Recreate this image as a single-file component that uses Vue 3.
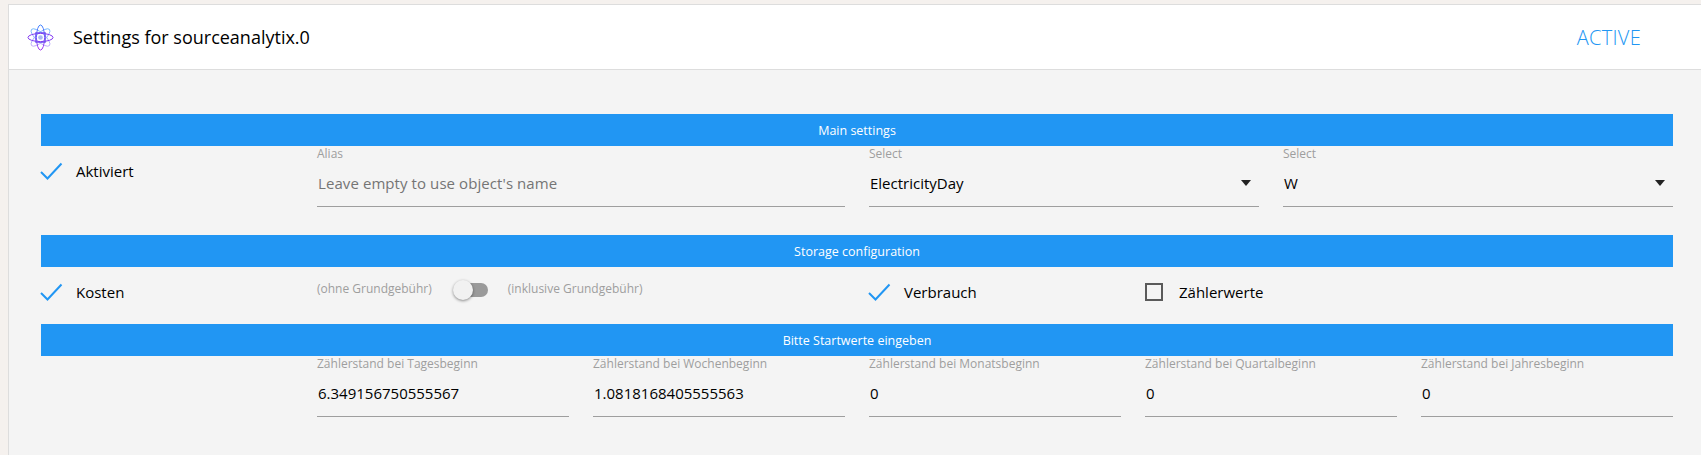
<script setup>
const topFields = [
  { label: 'Zählerstand bei Tagesbeginn', value: '6.349156750555567' },
  { label: 'Zählerstand bei Wochenbeginn', value: '1.0818168405555563' },
  { label: 'Zählerstand bei Monatsbeginn', value: '0' },
  { label: 'Zählerstand bei Quartalbeginn', value: '0' },
  { label: 'Zählerstand bei Jahresbeginn', value: '0' }
]
</script>

<template>
  <div class="page">
    <div class="panel">
      <header class="head">
        <svg class="logo" viewBox="0 0 28 28" fill="none">
          <defs>
            <linearGradient id="lg" gradientUnits="userSpaceOnUse" x1="14" y1="1" x2="14" y2="27">
              <stop offset="0" stop-color="#2f7bff" />
              <stop offset="1" stop-color="#a020f0" />
            </linearGradient>
            <linearGradient id="lga" gradientUnits="userSpaceOnUse" x1="14" y1="1" x2="14" y2="27" gradientTransform="rotate(-48 14 14)">
              <stop offset="0" stop-color="#55b8ff" />
              <stop offset="1" stop-color="#d3a0f8" />
            </linearGradient>
            <linearGradient id="lgb" gradientUnits="userSpaceOnUse" x1="14" y1="1" x2="14" y2="27" gradientTransform="rotate(48 14 14)">
              <stop offset="0" stop-color="#55b8ff" />
              <stop offset="1" stop-color="#d3a0f8" />
            </linearGradient>
          </defs>
          <ellipse cx="14" cy="14" rx="4.6" ry="12.5" stroke="url(#lga)" stroke-width="0.9" transform="rotate(48 14 14)" />
          <ellipse cx="14" cy="14" rx="4.6" ry="12.5" stroke="url(#lgb)" stroke-width="0.9" transform="rotate(-48 14 14)" />
          <ellipse cx="14" cy="14" rx="13" ry="4.2" stroke="#7a2cf0" stroke-width="0.95" />
          <ellipse cx="14" cy="14" rx="4.2" ry="13" stroke="url(#lg)" stroke-width="0.95" />
          <rect x="9" y="9" width="10" height="10" stroke="#6a4cf0" stroke-width="0.9" />
          <circle cx="14" cy="14" r="2.4" fill="#a9b8f2" />
        </svg>
        <span class="title">Settings for sourceanalytix.0</span>
        <span class="status">ACTIVE</span>
      </header>

      <main class="body">
        <div class="bar">Main settings</div>
        <div class="grid row-one">
          <label class="cell s2 check">
            <svg class="tick" viewBox="0 0 23 18" fill="none"><path d="M1 10l6.5 6.5L21.5 1.5" stroke="#2196f3" stroke-width="2" /></svg>
            <span>Aktiviert</span>
          </label>
          <div class="cell s4 field">
            <div class="lbl">Alias</div>
            <div class="input placeholder">Leave empty to use object's name</div>
          </div>
          <div class="cell s3 field">
            <div class="lbl">Select</div>
            <div class="input select"><span>ElectricityDay</span><i class="arrow"></i></div>
          </div>
          <div class="cell s3 field">
            <div class="lbl">Select</div>
            <div class="input select"><span>W</span><i class="arrow"></i></div>
          </div>
        </div>

        <div class="bar">Storage configuration</div>
        <div class="grid row-two">
          <label class="cell s2 check">
            <svg class="tick" viewBox="0 0 23 18" fill="none"><path d="M1 10l6.5 6.5L21.5 1.5" stroke="#2196f3" stroke-width="2" /></svg>
            <span>Kosten</span>
          </label>
          <div class="cell s4 switch">
            <span>(ohne Grundgebühr)</span>
            <span class="track"><i class="knob"></i></span>
            <span>(inklusive Grundgebühr)</span>
          </div>
          <label class="cell s2 check">
            <svg class="tick" viewBox="0 0 23 18" fill="none"><path d="M1 10l6.5 6.5L21.5 1.5" stroke="#2196f3" stroke-width="2" /></svg>
            <span>Verbrauch</span>
          </label>
          <label class="cell s2 check">
            <span class="box"></span>
            <span>Zählerwerte</span>
          </label>
        </div>

        <div class="bar">Bitte Startwerte eingeben</div>
        <div class="grid">
          <div class="cell s2"></div>
          <div v-for="f in topFields" :key="f.label" class="cell s2 field">
            <div class="lbl">{{ f.label }}</div>
            <div class="input">{{ f.value }}</div>
          </div>
        </div>
      </main>
    </div>
  </div>
</template>

<style>
html, body { margin: 0; background: #f5f1ee; overflow: hidden; }
</style>

<style scoped>
.page {
  height: 455px;
  box-sizing: border-box;
  padding: 4px 0 0 8px;
  background: #f5f1ee;
  font-family: "Open Sans", "Noto Sans", sans-serif;
  overflow: hidden;
}
.panel {
  height: 451px;
  box-sizing: border-box;
  border-top: 1px solid #dddddd;
  border-left: 1px solid #dddddd;
  background: #f4f4f4;
}
.head {
  height: 65px;
  box-sizing: border-box;
  display: flex;
  align-items: center;
  background: #fff;
  border-bottom: 1px solid #dddddd;
  padding-left: 18px;
}
.logo { width: 27px; height: 27px; flex: none; }
.title {
  margin-left: 19px;
  font-size: 18px;
  color: #000;
}
.status {
  margin-left: auto;
  margin-right: 60px;
  font-size: 20px;
  font-weight: 300;
  letter-spacing: 0.3px;
  color: #2196f3;
}
.body { padding: 44px 28px 0 32px; }
.bar {
  height: 32px;
  line-height: 33px;
  background: #2196f3;
  color: #fff;
  text-align: center;
  font-size: 12.5px;
}
.grid {
  display: grid;
  grid-template-columns: repeat(12, 1fr);
  margin: 0 -12px;
}
.row-one { padding-bottom: 28px; }
.row-two { height: 57px; }
.cell { padding: 0 12px; min-width: 0; }
.s2 { grid-column: span 2; }
.s3 { grid-column: span 3; }
.s4 { grid-column: span 4; }
.check {
  display: flex;
  align-items: center;
  height: 49px;
  font-size: 15px;
  color: #000;
}
.tick { width: 23px; height: 18px; flex: none; margin: 1px 13px 0 -1px; }
.box {
  width: 18px;
  height: 18px;
  box-sizing: border-box;
  border: 2px solid #5a5a5a;
  flex: none;
  margin: 0 16px 0 0;
}
.lbl {
  height: 14px;
  line-height: 15px;
  font-size: 12px;
  color: #9e9e9e;
  white-space: nowrap;
}
.input {
  height: 46px;
  line-height: 47px;
  border-bottom: 1px solid #9e9e9e;
  font-size: 15px;
  color: #000;
  white-space: nowrap;
  text-indent: 1px;
}
.placeholder { color: #757575; letter-spacing: 0.08px; }
.select {
  display: flex;
  align-items: center;
  justify-content: space-between;
  padding-right: 8px;
}
.arrow {
  width: 0;
  height: 0;
  border-left: 5px solid transparent;
  border-right: 5px solid transparent;
  border-top: 6px solid #222;
}
.switch {
  display: flex;
  align-items: center;
  height: 43px;
  font-size: 12px;
  color: #9e9e9e;
  white-space: nowrap;
}
.track {
  position: relative;
  width: 33px;
  height: 14px;
  margin: 2px 20px 0 23px;
  border-radius: 7px;
  background: #9a9a9a;
  flex: none;
}
.knob {
  position: absolute;
  left: -2px;
  top: -3px;
  width: 20px;
  height: 20px;
  border-radius: 50%;
  background: #f1f1f1;
  box-shadow: 0 1px 3px rgba(0, 0, 0, 0.45);
}
</style>
